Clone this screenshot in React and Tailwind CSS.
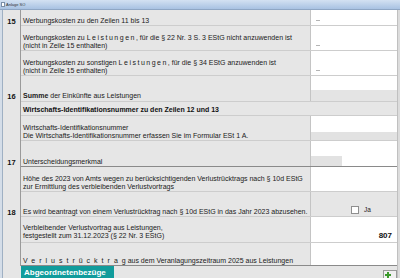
import React from "react";

const Dash = () => <span className="block w-[4px] h-[1px] bg-[#b4b4b4] ml-[5px] mb-[4px]" />;

function Num({ n, pb = "pb-0" }) {
  return (
    <div className={`w-[18px] shrink-0 border-r border-[#9a9a9a] bg-[#e6e6e6] flex items-end justify-center ${pb}`}>
      {n ? <span className="font-bold text-[7.5px] leading-[8px] text-[#111]">{n}</span> : null}
    </div>
  );
}

function Row({ h, n, pb = "pb-0", sep = "border-[#cdcdcd]", children, input }) {
  return (
    <div className={`flex ${h}`}>
      <Num n={n} pb={pb} />
      <div className={`flex flex-1 border-b ${sep}`}>
        <div className={`flex-1 flex flex-col justify-end pl-[2px] ${pb} text-[7px] leading-[8px] text-[#1a1a1a] whitespace-nowrap overflow-hidden`}>
          {children}
        </div>
        <div className="w-[87px] shrink-0 border-l border-[#c4c4c4] flex flex-col">{input}</div>
      </div>
    </div>
  );
}

export default function App() {
  return (
    <div className="w-[400px] h-[278px] overflow-hidden bg-[#e6e6e6] font-['Liberation_Sans',Arial,sans-serif] flex flex-col">
      {/* title bar */}
      <div className="h-[10px] shrink-0 border-b border-[#8ea6c4] bg-gradient-to-b from-[#d3e1f2] to-[#a8c2e2] flex items-center pl-[1px] gap-[1px]">
        <span className="block w-[4px] h-[5px] bg-white border border-[#7b8fa8]" />
        <span className="text-[4px] leading-[5px] text-[#333]">Anlage SO</span>
      </div>
      <div className="flex flex-1 min-h-0">
        <div className="w-[3px] shrink-0 bg-[#d4dde8] border-r border-[#9fb0c3]" />
        <div className="flex-1 flex flex-col min-w-0">
          <Row h="h-[16px]" n="15" input={<div className="flex-1 bg-white flex items-end"><Dash /></div>}>
            <div>Werbungskosten zu den Zeilen 11 bis 13</div>
          </Row>
          <Row h="h-[25px]" input={<div className="flex-1 bg-white flex items-end"><Dash /></div>}>
            <div>Werbungskosten zu <span className="tracking-[1.5px]">Leistungen</span>, für die § 22 Nr. 3 S. 3 EStG nicht anzuwenden ist</div>
            <div>(nicht in Zeile 15 enthalten)</div>
          </Row>
          <Row h="h-[25px]" input={<div className="flex-1 bg-white flex items-end"><Dash /></div>}>
            <div>Werbungskosten zu sonstigen <span className="tracking-[1.5px]">Leistungen</span>, für die § 34 EStG anzuwenden ist</div>
            <div>(nicht in Zeile 15 enthalten)</div>
          </Row>
          <Row h="h-[26px]" n="16" pb="pb-[1px]" input={<><div className="h-[14px] bg-white" /><div className="flex-1 bg-[#e4e4e4]" /></>}>
            <div><span className="font-bold">Summe</span> der Einkünfte aus Leistungen</div>
          </Row>
          <div className="flex h-[14px]">
            <Num />
            <div className="flex-1 border-b border-[#cdcdcd] flex items-end pl-[2px] pb-[1px] text-[7px] leading-[8px] font-bold text-[#111] whitespace-nowrap">
              Wirtschafts-Identifikationsnummer zu den Zeilen 12 und 13
            </div>
          </div>
          <Row h="h-[25px]" input={<><div className="h-[16px] bg-white" /><div className="flex-1 bg-[#e2e2e2]" /></>}>
            <div>Wirtschafts-Identifikationsnummer</div>
            <div>Die Wirtschafts-Identifikationsnummer erfassen Sie im Formular ESt 1 A.</div>
          </Row>
          <Row h="h-[26px]" n="17" sep="border-[#8a8a8a]" input={<><div className="flex-1 bg-white" /><div className="h-[10px] flex"><div className="w-[31px] bg-[#e2e2e2]" /><div className="flex-1 bg-white" /></div></>}>
            <div>Unterscheidungsmerkmal</div>
          </Row>
          <Row h="h-[25px]" input={<div className="flex-1 bg-white" />}>
            <div>Höhe des 2023 von Amts wegen zu berücksichtigenden Verlustrücktrags nach § 10d EStG</div>
            <div>zur Ermittlung des verbleibenden Verlustvortrags</div>
          </Row>
          <Row h="h-[25px]" n="18" input={
            <div className="flex-1 flex items-end pb-[2px] pl-[40px] gap-[5px]">
              <span className="block w-[8px] h-[8px] bg-white border border-[#8f8f8f]" />
              <span className="text-[6.5px] leading-[8px] text-[#222]">Ja</span>
            </div>
          }>
            <div>Es wird beantragt von einem Verlustrücktrag nach § 10d EStG in das Jahr 2023 abzusehen.</div>
          </Row>
          <Row h="h-[26px]" pb="pb-[2px]" input={
            <div className="flex-1 bg-white flex items-end justify-end pr-[5px] pb-[2px]">
              <span className="font-bold text-[8px] leading-[8px] text-[#111]">807</span>
            </div>
          }>
            <div>Verbleibender Verlustvortrag aus Leistungen,</div>
            <div>festgestellt zum 31.12.2023 (§ 22 Nr. 3 EStG)</div>
          </Row>
          <Row h="h-[23px]" sep="border-[#8a8a8a]" input={<div className="flex-1 bg-white" />}>
            <div><span className="tracking-[4px]">Verlustrücktra</span>g aus dem Veranlagungszeitraum 2025 aus Leistungen</div>
          </Row>
          <div className="flex flex-1">
            <div className="w-[18px] shrink-0 bg-[#e6e6e6]" />
            <div className="w-[93px] bg-[#119c9c] flex items-end pl-[3px] pb-[1px]">
              <span className="font-bold text-[8px] leading-[9px] text-white whitespace-nowrap">Abgeordnetenbezüge</span>
            </div>
            <div className="flex-1 flex justify-end items-end pr-[0px]">
              <div className="w-[14px] h-[8px] bg-[#f0f0f0] border border-[#9a9a9a] border-b-0 flex items-start pl-[1px] pt-[1px]">
                <svg width="6" height="6" viewBox="0 0 6 6"><path d="M2 0h2v2h2v2H4v2H2V4H0V2h2z" fill="#3c9a2c" /></svg>
              </div>
            </div>
          </div>
        </div>
        <div className="w-[3px] shrink-0 bg-[#dcdcdc] border-l border-[#c0c0c0]" />
      </div>
    </div>
  );
}
